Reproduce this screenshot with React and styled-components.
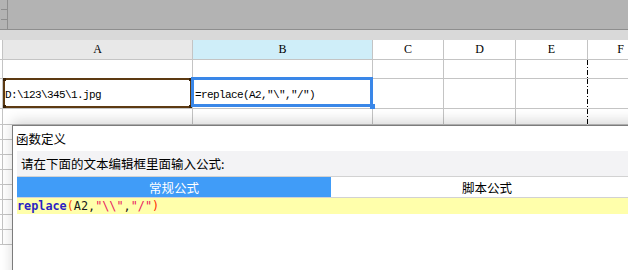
import React from 'react';
import styled, { createGlobalStyle } from 'styled-components';

const GlobalStyle = createGlobalStyle`
  html, body { margin: 0; padding: 0; background: #fff; }
  body { width: 628px; height: 270px; overflow: hidden; }
`;

const COLS = '3px 190px 180px 71px 72px 72px 66px';
const MONO = `"Liberation Mono", "DejaVu Sans Mono", monospace`;
const CJK = `"Noto Sans CJK SC", "Noto Sans", sans-serif`;

const Page = styled.div`
  position: relative;
  width: 628px;
  height: 270px;
  overflow: hidden;
  background: #fff;
`;

const TopBar = styled.div`
  display: flex;
  height: 29px;
  background: #b3b3b3;
  border-bottom: 1px solid #8e8e8e;
`;

const Ruler = styled.div`
  width: 8px;
  border-right: 1px solid #8e8e8e;
  display: flex;
  flex-direction: column;
  align-items: flex-end;
  gap: 9px;
  padding-top: 9px;
  box-sizing: border-box;
`;

const Tick = styled.span`
  display: block;
  width: 6px;
  height: 1px;
  background: #8e8e8e;
`;

const Band = styled.div`
  height: 10px;
  background: #d9d9d9;
`;

const Row = styled.div`
  display: grid;
  grid-template-columns: ${COLS};
  height: ${p => p.$h}px;
`;

const Cell = styled.div`
  position: relative;
  box-sizing: border-box;
  border-right: 1px solid ${p => (p.$pageBreak ? 'transparent' : '#c4c4c4')};
  border-bottom: 1px solid #c4c4c4;
  background: ${p => p.$bg || '#fff'};
  display: flex;
  align-items: center;
  padding: 3px 0 0 2px;
  font-family: ${MONO};
  font-size: 11px;
  letter-spacing: -0.6px;
  color: #000;
  white-space: nowrap;
  &::after {
    content: '';
    display: ${p => (p.$pageBreak ? 'block' : 'none')};
    position: absolute;
    top: 0;
    right: -1px;
    bottom: -1px;
    width: 1px;
    background: repeating-linear-gradient(to bottom, #000 0 5px, transparent 5px 7px, #000 7px 8px, transparent 8px 10px);
  }
`;

const HeadCell = styled(Cell)`
  justify-content: center;
  padding: 0;
  font-family: "Liberation Serif", serif;
  font-size: 12px;
  letter-spacing: 0;
`;

const RefSelect = styled.div`
  position: absolute;
  top: -1px;
  left: 0;
  right: 0;
  bottom: 0;
  border: 2px solid #5d3a12;
  pointer-events: none;
  & > i {
    position: absolute;
    width: 3px;
    height: 3px;
    background: #3a2208;
  }
`;

const ActiveSelect = styled.div`
  position: absolute;
  top: -2px;
  left: -2px;
  right: -1px;
  bottom: 1px;
  border: 3px solid #3a87e8;
  z-index: 2;
  &::after {
    content: '';
    position: absolute;
    right: -5px;
    bottom: -5px;
    width: 5px;
    height: 5px;
    background: #3a87e8;
  }
`;

const Dialog = styled.div`
  position: absolute;
  left: 12px;
  top: 125px;
  width: 636px;
  height: 170px;
  box-sizing: border-box;
  background: #fff;
  border: 1px solid #7c7c7c;
  box-shadow: 0 -4px 12px rgba(0, 0, 0, 0.16);
  font-family: ${CJK};
  font-size: 12px;
  color: #000;
  z-index: 5;
`;

const DialogTitle = styled.div`
  height: 25px;
  display: flex;
  align-items: center;
  padding-left: 3px;
  font-size: 12.5px;
`;

const DialogBody = styled.div`
  padding: 0 4px;
`;

const Prompt = styled.div`
  height: 25px;
  display: flex;
  align-items: center;
  padding-left: 4px;
  background: #f3f3f5;
  font-size: 12.5px;
`;

const Tabs = styled.div`
  display: grid;
  grid-template-columns: 314px 1fr;
  height: 20px;
  border-top: 1px solid #d2d2d2;
  border-bottom: 1px solid #d2d2d2;
  font-size: 12.5px;
`;

const Tab = styled.div`
  display: flex;
  align-items: center;
  justify-content: center;
  background: ${p => (p.$active ? '#409cf8' : '#fff')};
  color: ${p => (p.$active ? '#fff' : '#000')};
`;

const Editor = styled.div`
  height: 80px;
  background: #fff;
`;

const CodeLine = styled.div`
  height: 16px;
  display: flex;
  align-items: center;
  background: #ffffab;
  font-family: "DejaVu Sans Mono", monospace;
  font-size: 11.8px;
  white-space: pre;
`;

const Tok = styled.span`
  color: ${p => p.$c || '#1a1a1a'};
  font-weight: ${p => (p.$bold ? 700 : 400)};
`;

const heads = ['', 'A', 'B', 'C', 'D', 'E', 'F'];
const headBg = ['#fff', '#e8e8e8', '#cfeef9', '#fff', '#fff', '#fff', '#fff'];
const rowHeights = [19, 30, 16, 15, 15, 15, 15, 15, 15, 15, 15];

export default function App() {
  return (
    <Page>
      <GlobalStyle />
      <TopBar>
        <Ruler>
          <Tick />
          <Tick />
        </Ruler>
      </TopBar>
      <Band />
      <Row $h={20}>
        {heads.map((h, i) => (
          <HeadCell key={i} $bg={headBg[i]}>{h}</HeadCell>
        ))}
      </Row>
      {rowHeights.map((h, r) => (
        <Row key={r} $h={h}>
          {heads.map((_, c) => (
            <Cell key={c} $pageBreak={c === 5}>
              {r === 1 && c === 1 && (
                <>
                  {'D:\\123\\345\\1.jpg'}
                  <RefSelect>
                    <i style={{ left: -2, top: -2 }} />
                    <i style={{ right: -2, top: -2 }} />
                    <i style={{ left: -2, bottom: -2 }} />
                    <i style={{ right: -2, bottom: -2 }} />
                  </RefSelect>
                </>
              )}
              {r === 1 && c === 2 && (
                <>
                  {'=replace(A2,"\\","/")'}
                  <ActiveSelect />
                </>
              )}
            </Cell>
          ))}
        </Row>
      ))}

      <Dialog>
        <DialogTitle>函数定义</DialogTitle>
        <DialogBody>
          <Prompt>请在下面的文本编辑框里面输入公式:</Prompt>
          <Tabs>
            <Tab $active>常规公式</Tab>
            <Tab>脚本公式</Tab>
          </Tabs>
          <Editor>
            <CodeLine>
              <Tok $c="#2b1fc4" $bold>replace</Tok>
              <Tok $c="#ff4a00">(</Tok>
              <Tok>A2,</Tok>
              <Tok $c="#e8185e">{'"\\\\"'}</Tok>
              <Tok>,</Tok>
              <Tok $c="#e8185e">"/"</Tok>
              <Tok $c="#ff2a00">)</Tok>
            </CodeLine>
          </Editor>
        </DialogBody>
      </Dialog>
    </Page>
  );
}
